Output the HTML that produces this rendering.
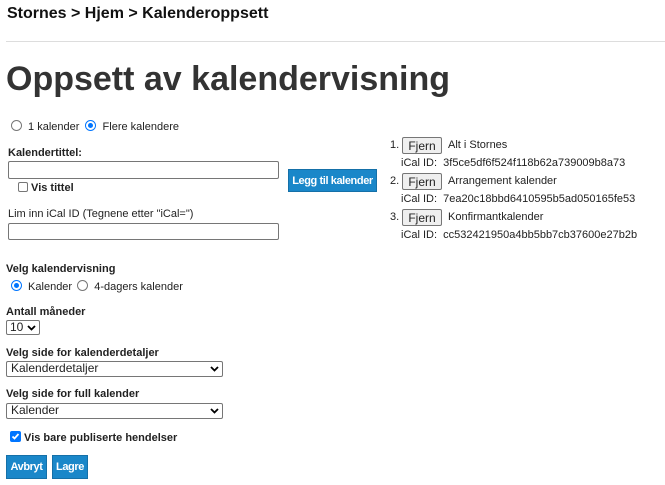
<!DOCTYPE html>
<html><head><style>
body{margin:0;width:665px;height:485px;background:#fff;font-family:"Liberation Sans",Arial,sans-serif;color:#222;position:relative;overflow:hidden}
.a{position:absolute;white-space:nowrap}
.s{font-size:11px}
.b{font-weight:bold}
.inp{position:absolute;border:1px solid #767676;background:#fff;box-sizing:border-box;border-radius:2px}
.rad{display:inline-block;width:11px;height:11px;border:1px solid #767676;border-radius:50%;box-sizing:border-box;vertical-align:-1px;position:relative;margin-right:3px}
.rad.on{border:1px solid #0075ff}
.rad.on:after{content:"";position:absolute;left:2px;top:2px;width:5px;height:5px;border-radius:50%;background:#0075ff}
.btn{position:absolute;background:#1a87c9;color:#fff;font-weight:bold;font-size:11px;border:1px solid #1570a8;box-sizing:border-box;display:flex;align-items:center;justify-content:center;letter-spacing:-0.4px}
.fj{position:absolute;border:1px solid #767676;background:#efefef;font-size:12px;box-sizing:border-box;display:flex;align-items:center;justify-content:center;border-radius:2px}
.sel{position:absolute;border:1px solid #767676;box-sizing:border-box;font-size:12px;padding-left:4px;line-height:13px;border-radius:2px}
.sel svg{position:absolute;right:3px;top:4px}
</style></head><body>
<div class="a b" style="left:7px;top:5px;font-size:16px;color:#111">Stornes &gt; Hjem &gt; Kalenderoppsett</div>
<div class="a" style="left:6px;top:41px;width:659px;height:1px;background:#ddd"></div>
<div class="a b" style="left:6px;top:60px;font-size:34px;color:#333">Oppsett av kalendervisning</div>

<div class="a s" style="left:11px;top:120px"><span class="rad"></span> 1 kalender <span class="rad on" style="margin-left:3px"></span> Flere kalendere</div>
<div class="a s b" style="left:8px;top:147px">Kalendertittel:</div>
<div class="inp" style="left:8px;top:161px;width:271px;height:18px"></div>
<div class="a s b" style="left:18px;top:182px"><span style="display:inline-block;width:10px;height:10px;border:1px solid #767676;border-radius:2px;vertical-align:-1px;box-sizing:border-box"></span> Vis tittel</div>
<div class="a s" style="left:8px;top:208px">Lim inn iCal ID (Tegnene etter "iCal=")</div>
<div class="inp" style="left:8px;top:223px;width:271px;height:17px"></div>
<div class="btn" style="left:288px;top:169px;width:89px;height:23px">Legg til kalender</div>

<div class="a s" style="left:390px;top:139px">1.</div><div class="fj" style="left:402px;top:137px;width:40px;height:17px">Fjern</div><div class="a s" style="left:448px;top:139px">Alt i Stornes</div>
<div class="a s" style="left:401px;top:157px">iCal ID:&nbsp; 3f5ce5df6f524f118b62a739009b8a73</div>
<div class="a s" style="left:390px;top:175px">2.</div><div class="fj" style="left:402px;top:173px;width:40px;height:17px">Fjern</div><div class="a s" style="left:448px;top:175px">Arrangement kalender</div>
<div class="a s" style="left:401px;top:193px">iCal ID:&nbsp; 7ea20c18bbd6410595b5ad050165fe53</div>
<div class="a s" style="left:390px;top:211px">3.</div><div class="fj" style="left:402px;top:209px;width:40px;height:17px">Fjern</div><div class="a s" style="left:448px;top:211px">Konfirmantkalender</div>
<div class="a s" style="left:401px;top:229px">iCal ID:&nbsp; cc532421950a4bb5bb7cb37600e27b2b</div>

<div class="a s b" style="left:6px;top:263px">Velg kalendervisning</div>
<div class="a s" style="left:11px;top:280px"><span class="rad on"></span> Kalender <span class="rad" style="margin-left:2px"></span> 4-dagers kalender</div>
<div class="a s b" style="left:6px;top:306px">Antall måneder</div>
<div class="sel" style="left:6px;top:320px;width:34px;height:15px;padding-left:3px">10<svg width="9" height="6" viewBox="0 0 9 6"><path d="M1 1l3.5 3.5L8 1" stroke="#000" stroke-width="1.8" fill="none"/></svg></div>
<div class="a s b" style="left:6px;top:347px">Velg side for kalenderdetaljer</div>
<div class="sel" style="left:6px;top:361px;width:217px;height:16px">Kalenderdetaljer<svg width="9" height="6" viewBox="0 0 9 6"><path d="M1 1l3.5 3.5L8 1" stroke="#000" stroke-width="1.8" fill="none"/></svg></div>
<div class="a s b" style="left:6px;top:388px">Velg side for full kalender</div>
<div class="sel" style="left:6px;top:403px;width:217px;height:16px">Kalender<svg width="9" height="6" viewBox="0 0 9 6"><path d="M1 1l3.5 3.5L8 1" stroke="#000" stroke-width="1.8" fill="none"/></svg></div>
<div class="a s b" style="left:10px;top:431px"><span style="display:inline-block;width:11px;height:11px;background:#0075ff;border-radius:2px;vertical-align:-1px;position:relative"><svg width="11" height="11" viewBox="0 0 11 11" style="position:absolute;left:0;top:0"><path d="M2.5 5.5l2 2 4-4.5" stroke="#fff" stroke-width="1.8" fill="none"/></svg></span> Vis bare publiserte hendelser</div>
<div class="btn" style="left:6px;top:455px;width:41px;height:24px">Avbryt</div>
<div class="btn" style="left:52px;top:455px;width:36px;height:24px">Lagre</div>
</body></html>
